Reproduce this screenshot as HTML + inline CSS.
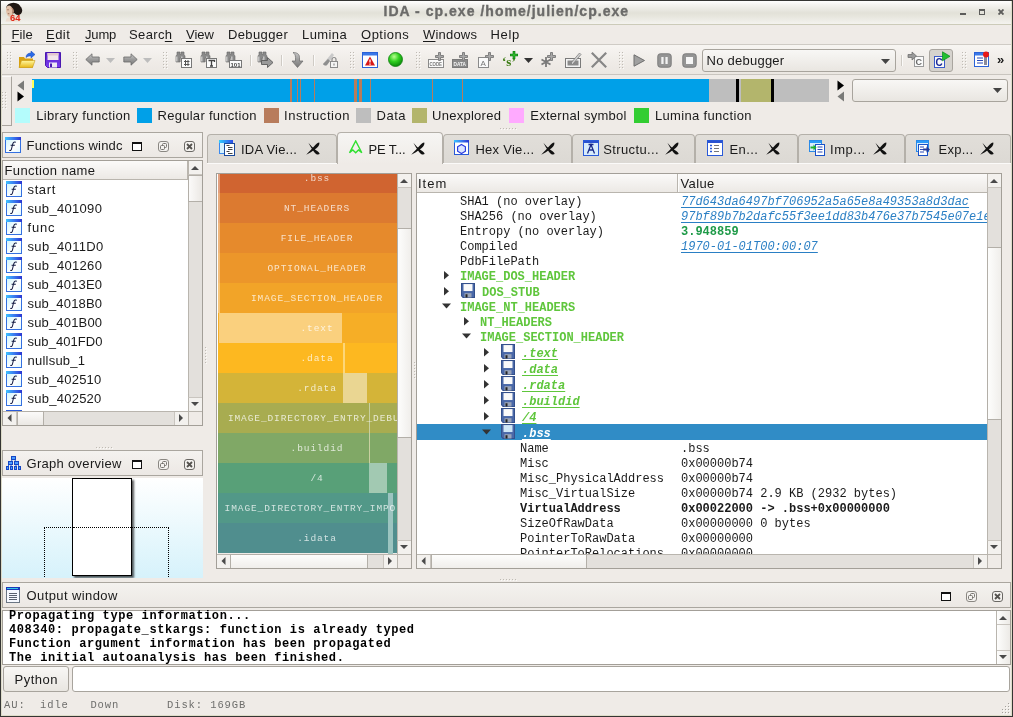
<!DOCTYPE html>
<html><head><meta charset="utf-8">
<style>
*{box-sizing:border-box;margin:0;padding:0}
html,body{width:1013px;height:717px;overflow:hidden;background:#efebe7}
body{font-family:"Liberation Sans",sans-serif;font-size:13px;color:#1a1a1a;position:relative}
.a{position:absolute}
.t{position:absolute;white-space:nowrap;line-height:18px;height:18px}
.m{font-family:"Liberation Mono",monospace}
u{text-decoration:underline;text-underline-offset:2px;text-decoration-thickness:1px}
/* window frame */
#frame{left:0;top:0;width:1013px;height:717px;border:1px solid #353533;pointer-events:none;z-index:50}#frame2{left:1011px;top:1px;width:1px;height:715px;background:#deddc9;z-index:49}#frame3{left:1px;top:715px;width:1011px;height:1px;background:#deddc9;z-index:49}
#title{left:1px;top:1px;width:1011px;height:23px;background:linear-gradient(#ffffff 0%,#f5f4f1 15%,#e2e1d8 52%,#e8e7df 70%,#f4f3ef 100%)}
#titleline{left:1px;top:24px;width:1011px;height:1px;background:#cccbb9}
#menuline{left:1px;top:44px;width:1011px;height:1px;background:#cfcbc5}
#tbar{left:1px;top:45px;width:1011px;height:29px;background:linear-gradient(#f7f5f2,#efebe7 60%,#ebe7e2)}
#tbarline{left:1px;top:74px;width:1011px;height:1px;background:#c9c5bf}
.hd{position:absolute;width:4px;background-image:radial-gradient(circle at 1px 1px,#b9b4ac 0.7px,transparent 0.9px);background-size:3px 3px}
.sep{position:absolute;width:1px;height:11px;top:55px;background:#cfcbc5;box-shadow:1px 0 0 #fbfaf9}
.sq{position:absolute;top:108px;width:15px;height:15px}
.dock{position:absolute;border:1px solid #aaa69f;background:linear-gradient(#f4f2ef,#ece8e4)}
.tab{position:absolute;top:134px;height:29px;background:linear-gradient(#e1ded9,#dcd9d4);border:1px solid #b4b0a9;border-bottom:none;border-radius:4px 4px 0 0}
.tab.on{top:132px;height:32px;background:linear-gradient(#f6f5f3,#efebe7);z-index:3}
.sb{position:absolute;background:#e3e0dc;border-left:1px solid #b9b5ae}
.btn{position:absolute;background:linear-gradient(#f8f7f5,#e9e6e1);border:1px solid #a8a49d}
.row{margin-top:2px;position:absolute;left:0;height:15px;width:570px;line-height:15px;font-family:"Liberation Mono",monospace;font-size:12px;white-space:nowrap}
.g{color:#5fc63c;font-weight:bold}
.lnk{color:#2a7fc4;font-style:italic;text-decoration:underline;text-underline-offset:2px;text-decoration-thickness:1px}
.blk{position:absolute;left:0;width:198px;height:30px;text-align:center;line-height:31px;font-family:"Liberation Mono",monospace;font-size:9.5px;letter-spacing:0.9px;color:rgba(255,255,255,.74);white-space:nowrap;overflow:hidden}
.gi{font-style:italic;text-decoration:underline;text-underline-offset:2px;text-decoration-thickness:1px}.selw{color:#fff}.ent{color:#1e9a48;font-weight:bold}.bd{font-weight:bold}
</style></head><body><div id="root" style="position:absolute;left:0;top:0;width:1013px;height:717px;will-change:transform">
<div class="a" id="title"></div><div class="a" id="titleline"></div>
<div class="a" id="menuline"></div><div class="a" id="tbar"></div><div class="a" id="tbarline"></div>
<div class="t" style="/*ls*/letter-spacing:1.03px;left:383.5px;top:2px;font-weight:bold;font-size:14px;color:#6b6b69;-webkit-text-stroke:0.35px #6b6b69;" id="ttl">IDA - cp.exe /home/julien/cp.exe</div>
<svg class="a" style="left:4px;top:2px" width="19" height="20" viewBox="0 0 19 20"><path d="M2.500 16.500Q6 14.500 8 14L13 13.500Q15.500 15.500 16.500 19.500L1.500 19.500Z" fill="#ecdccf"/><ellipse cx="9.500" cy="6" rx="7.300" ry="5.300" fill="#1f1713"/><ellipse cx="14" cy="8.500" rx="4.200" ry="4.600" fill="#1f1713"/><path d="M2 6.500Q2.500 3.500 5.500 3.500Q8.500 4.500 8.800 8Q9 11.500 7.500 14.500Q5 15.500 3.500 13.500Q1.500 10 2 6.500Z" fill="#e3c3ab"/><path d="M6.500 5Q8.800 7 8.500 11Q8 13.500 7 14.500Q9.500 13 10 9.500Q10 6 6.500 5Z" fill="#b98a72"/><path d="M3.200 7.800h1.600M3.800 11.700h1.500" stroke="#7a4a3a" stroke-width="0.700"/><text x="6" y="18.600" font-family="Liberation Sans" font-weight="bold" font-size="9.500" fill="#e02818" textLength="10.500" lengthAdjust="spacingAndGlyphs">64</text></svg>
<!-- window buttons -->
<div class="a" style="left:960px;top:13px;width:6px;height:2px;background:#5c5c5a"></div>
<div class="a" style="left:979px;top:9px;width:6px;height:6px;border:1px solid #5c5c5a;border-top-width:2px"></div>
<svg class="a" style="left:998px;top:9px" width="6" height="6" viewBox="0 0 6 6"><path d="M0.500 0.500L5.500 5.500M5.500 0.500L0.500 5.500" stroke="#5c5c5a" stroke-width="1.900"/></svg>

<div class="t" style="/*ls*/letter-spacing:0.09px;left:11.5px;top:26px" id="m1"><u>F</u>ile</div>
<div class="t" style="/*ls*/letter-spacing:0.48px;left:46.0px;top:26px" id="m2"><u>E</u>dit</div>
<div class="t" style="/*ls*/letter-spacing:-0.15px;left:85.0px;top:26px" id="m3"><u>J</u>ump</div>
<div class="t" style="/*ls*/letter-spacing:0.37px;left:129.0px;top:26px" id="m4">Searc<u>h</u></div>
<div class="t" style="/*ls*/letter-spacing:0.01px;left:186.0px;top:26px" id="m5"><u>V</u>iew</div>
<div class="t" style="/*ls*/letter-spacing:0.37px;left:228.0px;top:26px" id="m6">Deb<u>u</u>gger</div>
<div class="t" style="/*ls*/letter-spacing:0.42px;left:302.0px;top:26px" id="m7">Lumi<u>n</u>a</div>
<div class="t" style="/*ls*/letter-spacing:0.50px;left:361.0px;top:26px" id="m8"><u>O</u>ptions</div>
<div class="t" style="/*ls*/letter-spacing:0.19px;left:423.0px;top:26px" id="m9"><u>W</u>indows</div>
<div class="t" style="/*ls*/letter-spacing:0.63px;left:490.5px;top:26px" id="m10">Help</div>

<svg width="0" height="0" style="position:absolute"><defs>
<linearGradient id="gy" x1="0" y1="0" x2="0" y2="1"><stop offset="0" stop-color="#fff8a0"/><stop offset="1" stop-color="#e8b818"/></linearGradient>
<linearGradient id="gp" x1="0" y1="0" x2="0" y2="1"><stop offset="0" stop-color="#5a22c8"/><stop offset="1" stop-color="#7a3cf0"/></linearGradient>
<linearGradient id="gg" x1="0" y1="0" x2="0" y2="1"><stop offset="0" stop-color="#c8c8c8"/><stop offset="0.5" stop-color="#9a9a9a"/><stop offset="1" stop-color="#7a7a7a"/></linearGradient>
<radialGradient id="gb" cx="0.4" cy="0.3" r="0.7"><stop offset="0" stop-color="#b8ff90"/><stop offset="0.5" stop-color="#30d020"/><stop offset="1" stop-color="#0a8a0a"/></radialGradient>
<g id="bino"><path d="M2 1h3v2.500h1v-2.500h3v2.500l1 1.500v6h-4v-4h-1v4h-4v-6l1-1.500z" fill="#8a8a8a" stroke="#666" stroke-width="0.6"/><path d="M1.800 5.500v5M6.800 5.500v5" stroke="#d4d4d4" stroke-width="1.200"/></g>
<g id="plus"><path d="M1.500 -0.500h2v3h3v2h-3v3h-2v-3h-3v-2h3z" fill="#a8a8a8" stroke="#808080" stroke-width="1"/></g>
</defs></svg>
<div class="a" style="left:7px;top:52px;width:1px;height:1px;background:#bfbbb4;box-shadow:0px 3px 0 #bfbbb4,0px 6px 0 #bfbbb4,0px 9px 0 #bfbbb4,0px 12px 0 #bfbbb4,0px 15px 0 #bfbbb4,3px 0px 0 #bfbbb4,3px 3px 0 #bfbbb4,3px 6px 0 #bfbbb4,3px 9px 0 #bfbbb4,3px 12px 0 #bfbbb4,3px 15px 0 #bfbbb4,1px 1px 0 #fbfaf8,1px 4px 0 #fbfaf8,1px 7px 0 #fbfaf8,1px 10px 0 #fbfaf8,1px 13px 0 #fbfaf8,1px 16px 0 #fbfaf8,4px 1px 0 #fbfaf8,4px 4px 0 #fbfaf8,4px 7px 0 #fbfaf8,4px 10px 0 #fbfaf8,4px 13px 0 #fbfaf8,4px 16px 0 #fbfaf8"></div>
<svg class="a" style="left:18px;top:51px" width="18" height="18" viewBox="0 0 18 18"><path d="M1 6h5l1 1.5h8v9h-14z" fill="#d8a010"/><path d="M3.5 9.5h13.5l-2.5 7h-13.5z" fill="url(#gy)" stroke="#c89810" stroke-width="0.6"/><path d="M8 6.5c0-3 2-4.5 5-4.5v-2l4 3.5-4 3.5v-2c-2 0-3.5 0.200-5 1.500z" fill="#2a6ae8" stroke="#1844b0" stroke-width="0.5"/></svg>
<svg class="a" style="left:45px;top:52px" width="16" height="16" viewBox="0 0 16 16"><path d="M0.500 0.500h15v15h-13l-2-2z" fill="url(#gp)" stroke="#4a18b0"/><rect x="2.500" y="1" width="11" height="7" fill="#f3e6ea"/><rect x="2.500" y="1" width="11" height="2.500" fill="#e4c8d0"/><rect x="4" y="10.500" width="8" height="5" fill="#ece8f4"/><rect x="5" y="11.500" width="2" height="3.500" fill="#4a18b0"/></svg>
<div class="a" style="left:73px;top:52px;width:1px;height:1px;background:#bfbbb4;box-shadow:0px 3px 0 #bfbbb4,0px 6px 0 #bfbbb4,0px 9px 0 #bfbbb4,0px 12px 0 #bfbbb4,0px 15px 0 #bfbbb4,3px 0px 0 #bfbbb4,3px 3px 0 #bfbbb4,3px 6px 0 #bfbbb4,3px 9px 0 #bfbbb4,3px 12px 0 #bfbbb4,3px 15px 0 #bfbbb4,1px 1px 0 #fbfaf8,1px 4px 0 #fbfaf8,1px 7px 0 #fbfaf8,1px 10px 0 #fbfaf8,1px 13px 0 #fbfaf8,1px 16px 0 #fbfaf8,4px 1px 0 #fbfaf8,4px 4px 0 #fbfaf8,4px 7px 0 #fbfaf8,4px 10px 0 #fbfaf8,4px 13px 0 #fbfaf8,4px 16px 0 #fbfaf8"></div>
<svg class="a" style="left:85px;top:53px" width="15" height="13" viewBox="0 0 15 13"><path d="M7 0.800v3.200h7.200v5h-7.200v3.200l-6.200-5.700z" fill="url(#gg)" stroke="#6a6a6a" stroke-width="0.8"/></svg>
<svg class="a" style="left:106px;top:58px" width="9" height="5"><path d="M0 0H9L4.500 5Z" fill="#bdbdbd"/></svg>
<svg class="a" style="left:123px;top:53px" width="15" height="13" viewBox="0 0 15 13"><path d="M8 0.800v3.200h-7.200v5h7.200v3.200l6.200-5.700z" fill="url(#gg)" stroke="#6a6a6a" stroke-width="0.8"/></svg>
<svg class="a" style="left:143px;top:58px" width="9" height="5"><path d="M0 0H9L4.500 5Z" fill="#bdbdbd"/></svg>
<div class="a" style="left:163px;top:52px;width:1px;height:1px;background:#bfbbb4;box-shadow:0px 3px 0 #bfbbb4,0px 6px 0 #bfbbb4,0px 9px 0 #bfbbb4,0px 12px 0 #bfbbb4,0px 15px 0 #bfbbb4,3px 0px 0 #bfbbb4,3px 3px 0 #bfbbb4,3px 6px 0 #bfbbb4,3px 9px 0 #bfbbb4,3px 12px 0 #bfbbb4,3px 15px 0 #bfbbb4,1px 1px 0 #fbfaf8,1px 4px 0 #fbfaf8,1px 7px 0 #fbfaf8,1px 10px 0 #fbfaf8,1px 13px 0 #fbfaf8,1px 16px 0 #fbfaf8,4px 1px 0 #fbfaf8,4px 4px 0 #fbfaf8,4px 7px 0 #fbfaf8,4px 10px 0 #fbfaf8,4px 13px 0 #fbfaf8,4px 16px 0 #fbfaf8"></div>
<svg class="a" style="left:175px;top:51px" width="17" height="17" viewBox="0 0 17 17"><use href="#bino"/><rect x="6.500" y="7.500" width="10" height="9" fill="#fbfbfb" stroke="#777"/><path d="M9 10.500h5.500M9 13.500h5.500M10.500 9v6M13 9v6" stroke="#555" stroke-width="1"/></svg>
<svg class="a" style="left:200px;top:51px" width="17" height="17" viewBox="0 0 17 17"><use href="#bino"/><rect x="6.500" y="7.500" width="10" height="9" fill="#fbfbfb" stroke="#777"/><path d="M8.500 9.500h6v1.500M11.500 9.500v5.500M10 15h3" stroke="#444" stroke-width="1.300" fill="none"/></svg>
<svg class="a" style="left:225px;top:51px" width="17" height="17" viewBox="0 0 17 17"><use href="#bino"/><rect x="4.500" y="9.500" width="12" height="7" fill="#fbfbfb" stroke="#777"/><text x="5.500" y="15.500" font-family="Liberation Sans" font-weight="bold" font-size="6" fill="#444">101</text></svg>
<div class="sep" style="left:250px"></div>
<svg class="a" style="left:257px;top:51px" width="17" height="17" viewBox="0 0 17 17"><use href="#bino"/><path d="M4.500 9.500h6v-3l5.500 5-5.500 5v-3h-6z" fill="#9a9a9a" stroke="#5a5a5a" stroke-width="0.900"/></svg>
<div class="sep" style="left:281px"></div>
<svg class="a" style="left:291px;top:52px" width="14" height="16" viewBox="0 0 14 16"><path d="M2 0.500c4 0 6.500 1.500 6.500 5v3.500h3.500l-5.500 6.500-5.500-6.500h3.500v-3.500c0-2.500-1-4-2.500-5z" fill="url(#gg)" stroke="#6a6a6a" stroke-width="0.700"/></svg>
<div class="sep" style="left:313px"></div>
<svg class="a" style="left:322px;top:52px" width="16" height="16" viewBox="0 0 16 16"><path d="M1 12l9-11 2 2-7 10c-1.500 1-3 0.500-4-1z" fill="#c9c9c9"/><path d="M1 12l5-5 2 2-3 4c-1.500 1-3 0.500-4-1z" fill="#8e8e8e"/><rect x="8.500" y="9.500" width="7" height="6" fill="#f4f4f4" stroke="#8a8a8a"/><path d="M10 9.500v-2a2 2 0 0 1 4 0v2" fill="none" stroke="#8a8a8a" stroke-width="1.200"/><rect x="11.500" y="11.500" width="1" height="2" fill="#777"/></svg>
<div class="a" style="left:350px;top:52px;width:1px;height:1px;background:#bfbbb4;box-shadow:0px 3px 0 #bfbbb4,0px 6px 0 #bfbbb4,0px 9px 0 #bfbbb4,0px 12px 0 #bfbbb4,0px 15px 0 #bfbbb4,3px 0px 0 #bfbbb4,3px 3px 0 #bfbbb4,3px 6px 0 #bfbbb4,3px 9px 0 #bfbbb4,3px 12px 0 #bfbbb4,3px 15px 0 #bfbbb4,1px 1px 0 #fbfaf8,1px 4px 0 #fbfaf8,1px 7px 0 #fbfaf8,1px 10px 0 #fbfaf8,1px 13px 0 #fbfaf8,1px 16px 0 #fbfaf8,4px 1px 0 #fbfaf8,4px 4px 0 #fbfaf8,4px 7px 0 #fbfaf8,4px 10px 0 #fbfaf8,4px 13px 0 #fbfaf8,4px 16px 0 #fbfaf8"></div>
<svg class="a" style="left:362px;top:52px" width="16" height="16" viewBox="0 0 16 16"><rect x="0.500" y="0.500" width="15" height="15" fill="#fff" stroke="#2a62d8"/><rect x="1" y="1" width="14" height="2.500" fill="#3a78e8"/><path d="M8 4.500l5 9h-10z" fill="#d81818"/><path d="M8 7.500v3M8 11.500v1.200" stroke="#fff" stroke-width="1.300"/></svg>
<svg class="a" style="left:388px;top:52px" width="15" height="15" viewBox="0 0 15 15"><circle cx="7.500" cy="7.500" r="7" fill="url(#gb)" stroke="#108010" stroke-width="0.800"/></svg>
<div class="a" style="left:416px;top:52px;width:1px;height:1px;background:#bfbbb4;box-shadow:0px 3px 0 #bfbbb4,0px 6px 0 #bfbbb4,0px 9px 0 #bfbbb4,0px 12px 0 #bfbbb4,0px 15px 0 #bfbbb4,3px 0px 0 #bfbbb4,3px 3px 0 #bfbbb4,3px 6px 0 #bfbbb4,3px 9px 0 #bfbbb4,3px 12px 0 #bfbbb4,3px 15px 0 #bfbbb4,1px 1px 0 #fbfaf8,1px 4px 0 #fbfaf8,1px 7px 0 #fbfaf8,1px 10px 0 #fbfaf8,1px 13px 0 #fbfaf8,1px 16px 0 #fbfaf8,4px 1px 0 #fbfaf8,4px 4px 0 #fbfaf8,4px 7px 0 #fbfaf8,4px 10px 0 #fbfaf8,4px 13px 0 #fbfaf8,4px 16px 0 #fbfaf8"></div>
<svg class="a" style="left:428px;top:50px" width="17" height="18" viewBox="0 0 17 18"><rect x="0.500" y="9.500" width="15" height="8" fill="#fafafa" stroke="#8a8a8a"/><text x="1.500" y="16" font-family="Liberation Sans" font-weight="bold" font-size="5.500" fill="#777" textLength="12.500" lengthAdjust="spacingAndGlyphs">CODE</text><g transform="translate(9,3)"><use href="#plus"/></g></svg>
<svg class="a" style="left:452px;top:50px" width="17" height="18" viewBox="0 0 17 18"><rect x="0.500" y="9.500" width="15" height="8" fill="#8a8a8a" stroke="#7a7a7a"/><text x="1.500" y="16" font-family="Liberation Sans" font-weight="bold" font-size="5.500" fill="#f4f4f4" textLength="12.500" lengthAdjust="spacingAndGlyphs">DATA</text><g transform="translate(9,3)"><use href="#plus"/></g></svg>
<svg class="a" style="left:478px;top:50px" width="17" height="18" viewBox="0 0 17 18"><rect x="0.500" y="7.500" width="10" height="10" fill="#fafafa" stroke="#8a8a8a"/><text x="2.500" y="16" font-family="Liberation Sans" font-size="8" fill="#777">A</text><g transform="translate(9,3)"><use href="#plus"/></g></svg>
<svg class="a" style="left:502px;top:50px" width="18" height="18" viewBox="0 0 18 18"><text x="0" y="16" font-family="Liberation Serif" font-weight="bold" font-size="13" fill="#3a7a12">‘s’</text><path d="M8 5h8M12 1v8" stroke="#0a7a0a" stroke-width="2.600"/><path d="M8.500 5h7M12 1.500v7" stroke="#38c838" stroke-width="1"/></svg>
<svg class="a" style="left:524px;top:58px" width="9" height="5"><path d="M0 0H9L4.500 5Z" fill="#333"/></svg>
<svg class="a" style="left:540px;top:50px" width="17" height="18" viewBox="0 0 17 18"><path d="M6 7v10M1.500 9.500l9 5M1.500 14.500l9-5" stroke="#7a7a7a" stroke-width="1.800"/><g transform="translate(9,3)"><use href="#plus"/></g></svg>
<svg class="a" style="left:565px;top:51px" width="17" height="17" viewBox="0 0 17 17"><rect x="0.500" y="7.500" width="15" height="9" fill="#f4f4f4" stroke="#7a7a7a"/><rect x="2.500" y="9.500" width="11" height="5" fill="#8a8a8a"/><path d="M6 12l8.500-10 1.500 1.500-8.500 10z" fill="#d0d0d0" stroke="#777" stroke-width="0.700"/></svg>
<svg class="a" style="left:591px;top:52px" width="16" height="16" viewBox="0 0 16 16"><path d="M0.800 0.800l14.400 14.400M15.200 0.800l-14.400 14.400" stroke="#868686" stroke-width="2.200"/></svg>
<div class="a" style="left:619px;top:52px;width:1px;height:1px;background:#bfbbb4;box-shadow:0px 3px 0 #bfbbb4,0px 6px 0 #bfbbb4,0px 9px 0 #bfbbb4,0px 12px 0 #bfbbb4,0px 15px 0 #bfbbb4,3px 0px 0 #bfbbb4,3px 3px 0 #bfbbb4,3px 6px 0 #bfbbb4,3px 9px 0 #bfbbb4,3px 12px 0 #bfbbb4,3px 15px 0 #bfbbb4,1px 1px 0 #fbfaf8,1px 4px 0 #fbfaf8,1px 7px 0 #fbfaf8,1px 10px 0 #fbfaf8,1px 13px 0 #fbfaf8,1px 16px 0 #fbfaf8,4px 1px 0 #fbfaf8,4px 4px 0 #fbfaf8,4px 7px 0 #fbfaf8,4px 10px 0 #fbfaf8,4px 13px 0 #fbfaf8,4px 16px 0 #fbfaf8"></div>
<svg class="a" style="left:633px;top:54px" width="13" height="13" viewBox="0 0 13 13"><path d="M1 0.800v11.400l10.500-5.700z" fill="#a0a0a0" stroke="#6e6e6e" stroke-width="1"/></svg>
<svg class="a" style="left:657px;top:53px" width="15" height="15" viewBox="0 0 15 15"><rect x="0.800" y="0.800" width="13.400" height="13.400" rx="2.500" fill="#949494" stroke="#7c7c7c" stroke-width="1"/><rect x="4.300" y="4" width="2.300" height="7" fill="#f2f2f2"/><rect x="8.400" y="4" width="2.300" height="7" fill="#f2f2f2"/></svg>
<svg class="a" style="left:682px;top:53px" width="15" height="15" viewBox="0 0 15 15"><rect x="0.800" y="0.800" width="13.400" height="13.400" rx="2.500" fill="#949494" stroke="#7c7c7c" stroke-width="1"/><rect x="4" y="4" width="7" height="7" fill="#f6f6f6"/></svg>
<div class="btn" style="left:702px;top:49px;width:194px;height:23px;border-radius:3px"></div>
<div class="t" style="/*ls*/letter-spacing:0.25px;left:706.5px;top:52px" id="nodbg">No debugger</div>
<svg class="a" style="left:881px;top:59px" width="9" height="5"><path d="M0 0H9L4.500 5Z" fill="#444"/></svg>
<div class="sep" style="left:901px"></div>
<svg class="a" style="left:907px;top:51px" width="18" height="17" viewBox="0 0 18 17"><rect x="7.500" y="5.500" width="9" height="10" fill="#fafafa" stroke="#9a9a9a"/><text x="8.500" y="14" font-family="Liberation Sans" font-weight="bold" font-size="9" fill="#6a6a6a">C</text><path d="M1 3.500h4v-2.500l4.500 4-4.500 4v-2.500h-4z" fill="#9a9a9a" stroke="#666" stroke-width="0.700"/></svg>
<div class="a" style="left:929px;top:49px;width:24px;height:23px;border:1px solid #a9a59f;border-radius:3px;background:#d6d3ce"></div>
<svg class="a" style="left:933px;top:51px" width="18" height="18" viewBox="0 0 18 18"><rect x="1.500" y="5.500" width="10" height="11" fill="#fafafa" stroke="#3a5ac8"/><text x="2.500" y="15" font-family="Liberation Sans" font-weight="bold" font-size="10" fill="#1a2a9a">C</text><path d="M9.500 0.800v9l7.500-4.500z" fill="#20c030" stroke="#0a8a1a" stroke-width="0.700"/></svg>
<div class="a" style="left:962px;top:52px;width:1px;height:1px;background:#bfbbb4;box-shadow:0px 3px 0 #bfbbb4,0px 6px 0 #bfbbb4,0px 9px 0 #bfbbb4,0px 12px 0 #bfbbb4,0px 15px 0 #bfbbb4,3px 0px 0 #bfbbb4,3px 3px 0 #bfbbb4,3px 6px 0 #bfbbb4,3px 9px 0 #bfbbb4,3px 12px 0 #bfbbb4,3px 15px 0 #bfbbb4,1px 1px 0 #fbfaf8,1px 4px 0 #fbfaf8,1px 7px 0 #fbfaf8,1px 10px 0 #fbfaf8,1px 13px 0 #fbfaf8,1px 16px 0 #fbfaf8,4px 1px 0 #fbfaf8,4px 4px 0 #fbfaf8,4px 7px 0 #fbfaf8,4px 10px 0 #fbfaf8,4px 13px 0 #fbfaf8,4px 16px 0 #fbfaf8"></div>
<svg class="a" style="left:974px;top:51px" width="17" height="17" viewBox="0 0 17 17"><rect x="0.500" y="1.500" width="14" height="14" fill="#fff" stroke="#2a62d8"/><rect x="1" y="2" width="13" height="2.500" fill="#3a78e8"/><path d="M3 7h6M3 9.500h6M3 12h6" stroke="#2a4ab8" stroke-width="1.200"/><rect x="10" y="6" width="3" height="8" fill="#8a8a9a"/><circle cx="12" cy="3.500" r="3" fill="#e81818"/></svg>
<div class="t" style="left:997px;top:51px;font-weight:bold;font-size:13px">»</div>

<div class="a" style="left:2px;top:92px;width:1px;height:1px;background:#bfbbb4;box-shadow:0px 3px 0 #bfbbb4,0px 6px 0 #bfbbb4,0px 9px 0 #bfbbb4,0px 12px 0 #bfbbb4,0px 15px 0 #bfbbb4,3px 0px 0 #bfbbb4,3px 3px 0 #bfbbb4,3px 6px 0 #bfbbb4,3px 9px 0 #bfbbb4,3px 12px 0 #bfbbb4,3px 15px 0 #bfbbb4,1px 1px 0 #fbfaf8,1px 4px 0 #fbfaf8,1px 7px 0 #fbfaf8,1px 10px 0 #fbfaf8,1px 13px 0 #fbfaf8,1px 16px 0 #fbfaf8,4px 1px 0 #fbfaf8,4px 4px 0 #fbfaf8,4px 7px 0 #fbfaf8,4px 10px 0 #fbfaf8,4px 13px 0 #fbfaf8,4px 16px 0 #fbfaf8"></div>
<div class="a" style="left:2px;top:76px;width:10px;height:50px;border-top:1px solid #fbfaf9;border-right:1px solid #a9a59e;border-bottom:1px solid #a9a59e"></div>
<svg class="a" style="left:17px;top:80px" width="8" height="22" viewBox="0 0 8 22"><path d="M7 0.5V10.5L0.5 5.5Z" fill="#7a7a78"/><path d="M0.5 11.5V21.5L7 16.5Z" fill="#000"/></svg>
<div class="a" style="left:32px;top:79px;width:797px;height:23px;background:#bebebe"></div>
<div class="a" style="left:32px;top:79px;width:677px;height:23px;background:#00a0e8"></div>
<div class="a" style="left:32px;top:80px;width:2px;height:8px;background:#ffff5a"></div>
<div class="a" style="left:290px;top:79px;width:2px;height:23px;background:#b87c5c"></div>
<div class="a" style="left:297px;top:79px;width:1px;height:23px;background:#b87c5c"></div>
<div class="a" style="left:300px;top:79px;width:1px;height:23px;background:#b87c5c"></div>
<div class="a" style="left:314px;top:79px;width:1px;height:23px;background:#b87c5c"></div>
<div class="a" style="left:354px;top:79px;width:3px;height:23px;background:#b87c5c"></div>
<div class="a" style="left:359px;top:79px;width:3px;height:23px;background:#b87c5c"></div>
<div class="a" style="left:370px;top:79px;width:1px;height:23px;background:#b87c5c"></div>
<div class="a" style="left:432px;top:79px;width:1px;height:23px;background:#b87c5c"></div>
<div class="a" style="left:462px;top:79px;width:1px;height:23px;background:#b87c5c"></div>
<div class="a" style="left:736px;top:79px;width:3px;height:23px;background:#000"></div>
<div class="a" style="left:741px;top:79px;width:30px;height:23px;background:#b3b56c"></div>
<div class="a" style="left:771px;top:79px;width:3px;height:23px;background:#000"></div>
<svg class="a" style="left:837px;top:80px" width="8" height="22" viewBox="0 0 8 22"><path d="M0.5 0.5V10.5L7 5.5Z" fill="#000"/><path d="M7 11.5V21.5L0.5 16.5Z" fill="#7a7a78"/></svg>
<div class="btn" style="left:852px;top:79px;width:156px;height:23px;border-radius:3px"></div>
<svg class="a" style="left:993px;top:88px" width="9" height="5"><path d="M0 0H9L4.5 5Z" fill="#444"/></svg>
<div class="sq" style="left:15px;background:#b4fcfc"></div><div class="t" style="/*ls*/letter-spacing:0.35px;left:36.2px;top:107px" id="l1">Library function</div>
<div class="sq" style="left:137px;background:#00a0e8"></div><div class="t" style="/*ls*/letter-spacing:0.28px;left:157.5px;top:107px" id="l2">Regular function</div>
<div class="sq" style="left:264px;background:#b87c5c"></div><div class="t" style="/*ls*/letter-spacing:0.56px;left:284.0px;top:107px" id="l3">Instruction</div>
<div class="sq" style="left:356px;background:#bebebe"></div><div class="t" style="/*ls*/letter-spacing:0.51px;left:376.5px;top:107px" id="l4">Data</div>
<div class="sq" style="left:412px;background:#b3b56c"></div><div class="t" style="/*ls*/letter-spacing:0.27px;left:432.0px;top:107px" id="l5">Unexplored</div>
<div class="sq" style="left:509px;background:#ffaaff"></div><div class="t" style="/*ls*/letter-spacing:0.27px;left:530.2px;top:107px" id="l6">External symbol</div>
<div class="sq" style="left:634px;background:#32cd32"></div><div class="t" style="/*ls*/letter-spacing:0.34px;left:654.9px;top:107px" id="l7">Lumina function</div>


<svg width="0" height="0" style="position:absolute"><defs><linearGradient id="gfb" x1="0" y1="0" x2="1" y2="0"><stop offset="0" stop-color="#3cc4ff"/><stop offset="0.5" stop-color="#3a7cf0"/><stop offset="1" stop-color="#2a34d0"/></linearGradient><linearGradient id="gf" x1="0" y1="0" x2="1" y2="1"><stop offset="0" stop-color="#c8f4fc"/><stop offset="0.6" stop-color="#ffffff"/><stop offset="1" stop-color="#e0f8ff"/></linearGradient></defs></svg>
<div class="dock" style="left:2px;top:132px;width:201px;height:26px"></div><svg class="a" style="left:5px;top:137px" width="16" height="16" viewBox="0 0 16 16"><rect x="0.500" y="0.500" width="15" height="15" fill="url(#gf)" stroke="#3470e0"/><rect x="0" y="0" width="16" height="3" fill="url(#gfb)"/><path d="M10.800 5.200c-2-0.800-2.800 0.300-3.200 2.300l-1.100 4.500c-0.300 1.300-1 1.700-2.200 1.200M5.600 8.200h4.200" fill="none" stroke="#101840" stroke-width="1.050"/></svg><div class="t" style="/*ls*/letter-spacing:0.20px;left:26.5px;top:137px" id="dt1">Functions windc</div>
<div class="a" style="left:132px;top:142px;width:10px;height:9px;border:1px solid #111;border-top-width:2px;background:#fff"></div><svg class="a" style="left:158px;top:141px" width="12" height="12" viewBox="0 0 12 12"><rect x="0.500" y="0.500" width="10" height="10" rx="2.500" fill="#f4f2ef" stroke="#8a8782"/><rect x="4.500" y="2.500" width="4" height="4" fill="none" stroke="#77746f" rx="1"/><rect x="2.500" y="4.500" width="4" height="4" fill="#f4f2ef" stroke="#77746f" rx="1"/></svg><svg class="a" style="left:184px;top:141px" width="12" height="12" viewBox="0 0 12 12"><rect x="0.500" y="0.500" width="10" height="10" rx="2.500" fill="#f4f2ef" stroke="#6a6864"/><path d="M3 3l5 5M8 3l-5 5" stroke="#55534f" stroke-width="1.800"/></svg>
<div class="a" style="left:2px;top:160px;width:201px;height:266px;border:1px solid #a39f98;background:#fff"></div>
<div class="a" style="left:3px;top:161px;width:185px;height:19px;background:linear-gradient(#fbfaf9,#ece9e5);border-bottom:1px solid #b9b5ae;border-right:1px solid #b9b5ae"></div>
<div class="t" style="/*ls*/letter-spacing:0.38px;left:4.5px;top:162px" id="fh">Function name</div>
<svg class="a" style="left:6px;top:181px" width="16" height="16" viewBox="0 0 16 16"><rect x="0.500" y="0.500" width="15" height="15" fill="url(#gf)" stroke="#3470e0"/><rect x="0" y="0" width="16" height="3" fill="url(#gfb)"/><path d="M10.800 5.200c-2-0.800-2.800 0.300-3.200 2.300l-1.100 4.500c-0.300 1.300-1 1.700-2.200 1.200M5.600 8.200h4.200" fill="none" stroke="#101840" stroke-width="1.050"/></svg>
<div class="t" style="/*ls*/letter-spacing:0.63px;left:27.5px;top:181px" id="fn0">start</div>
<svg class="a" style="left:6px;top:200px" width="16" height="16" viewBox="0 0 16 16"><rect x="0.500" y="0.500" width="15" height="15" fill="url(#gf)" stroke="#3470e0"/><rect x="0" y="0" width="16" height="3" fill="url(#gfb)"/><path d="M10.800 5.200c-2-0.800-2.800 0.300-3.200 2.300l-1.100 4.500c-0.300 1.300-1 1.700-2.200 1.200M5.600 8.200h4.200" fill="none" stroke="#101840" stroke-width="1.050"/></svg>
<div class="t" style="/*ls*/letter-spacing:0.31px;left:27.5px;top:200px" id="fn1">sub_401090</div>
<svg class="a" style="left:6px;top:219px" width="16" height="16" viewBox="0 0 16 16"><rect x="0.500" y="0.500" width="15" height="15" fill="url(#gf)" stroke="#3470e0"/><rect x="0" y="0" width="16" height="3" fill="url(#gfb)"/><path d="M10.800 5.200c-2-0.800-2.800 0.300-3.200 2.300l-1.100 4.500c-0.300 1.300-1 1.700-2.200 1.200M5.600 8.200h4.200" fill="none" stroke="#101840" stroke-width="1.050"/></svg>
<div class="t" style="/*ls*/letter-spacing:0.83px;left:27.5px;top:219px" id="fn2">func</div>
<svg class="a" style="left:6px;top:238px" width="16" height="16" viewBox="0 0 16 16"><rect x="0.500" y="0.500" width="15" height="15" fill="url(#gf)" stroke="#3470e0"/><rect x="0" y="0" width="16" height="3" fill="url(#gfb)"/><path d="M10.800 5.200c-2-0.800-2.800 0.300-3.200 2.300l-1.100 4.500c-0.300 1.300-1 1.700-2.200 1.200M5.600 8.200h4.200" fill="none" stroke="#101840" stroke-width="1.050"/></svg>
<div class="t" style="/*ls*/letter-spacing:0.33px;left:27.5px;top:238px" id="fn3">sub_4011D0</div>
<svg class="a" style="left:6px;top:257px" width="16" height="16" viewBox="0 0 16 16"><rect x="0.500" y="0.500" width="15" height="15" fill="url(#gf)" stroke="#3470e0"/><rect x="0" y="0" width="16" height="3" fill="url(#gfb)"/><path d="M10.800 5.200c-2-0.800-2.800 0.300-3.200 2.300l-1.100 4.500c-0.300 1.300-1 1.700-2.200 1.200M5.600 8.200h4.200" fill="none" stroke="#101840" stroke-width="1.050"/></svg>
<div class="t" style="/*ls*/letter-spacing:0.31px;left:27.5px;top:257px" id="fn4">sub_401260</div>
<svg class="a" style="left:6px;top:276px" width="16" height="16" viewBox="0 0 16 16"><rect x="0.500" y="0.500" width="15" height="15" fill="url(#gf)" stroke="#3470e0"/><rect x="0" y="0" width="16" height="3" fill="url(#gfb)"/><path d="M10.800 5.200c-2-0.800-2.800 0.300-3.200 2.300l-1.100 4.500c-0.300 1.300-1 1.700-2.200 1.200M5.600 8.200h4.200" fill="none" stroke="#101840" stroke-width="1.050"/></svg>
<div class="t" style="/*ls*/letter-spacing:0.17px;left:27.5px;top:276px" id="fn5">sub_4013E0</div>
<svg class="a" style="left:6px;top:295px" width="16" height="16" viewBox="0 0 16 16"><rect x="0.500" y="0.500" width="15" height="15" fill="url(#gf)" stroke="#3470e0"/><rect x="0" y="0" width="16" height="3" fill="url(#gfb)"/><path d="M10.800 5.200c-2-0.800-2.800 0.300-3.200 2.300l-1.100 4.500c-0.300 1.300-1 1.700-2.200 1.200M5.600 8.200h4.200" fill="none" stroke="#101840" stroke-width="1.050"/></svg>
<div class="t" style="/*ls*/letter-spacing:0.17px;left:27.5px;top:295px" id="fn6">sub_4018B0</div>
<svg class="a" style="left:6px;top:314px" width="16" height="16" viewBox="0 0 16 16"><rect x="0.500" y="0.500" width="15" height="15" fill="url(#gf)" stroke="#3470e0"/><rect x="0" y="0" width="16" height="3" fill="url(#gfb)"/><path d="M10.800 5.200c-2-0.800-2.800 0.300-3.200 2.300l-1.100 4.500c-0.300 1.300-1 1.700-2.200 1.200M5.600 8.200h4.200" fill="none" stroke="#101840" stroke-width="1.050"/></svg>
<div class="t" style="/*ls*/letter-spacing:0.17px;left:27.5px;top:314px" id="fn7">sub_401B00</div>
<svg class="a" style="left:6px;top:333px" width="16" height="16" viewBox="0 0 16 16"><rect x="0.500" y="0.500" width="15" height="15" fill="url(#gf)" stroke="#3470e0"/><rect x="0" y="0" width="16" height="3" fill="url(#gfb)"/><path d="M10.800 5.200c-2-0.800-2.800 0.300-3.200 2.300l-1.100 4.500c-0.300 1.300-1 1.700-2.200 1.200M5.600 8.200h4.200" fill="none" stroke="#101840" stroke-width="1.050"/></svg>
<div class="t" style="/*ls*/letter-spacing:0.06px;left:27.5px;top:333px" id="fn8">sub_401FD0</div>
<svg class="a" style="left:6px;top:352px" width="16" height="16" viewBox="0 0 16 16"><rect x="0.500" y="0.500" width="15" height="15" fill="url(#gf)" stroke="#3470e0"/><rect x="0" y="0" width="16" height="3" fill="url(#gfb)"/><path d="M10.800 5.200c-2-0.800-2.800 0.300-3.200 2.300l-1.100 4.500c-0.300 1.300-1 1.700-2.200 1.200M5.600 8.200h4.200" fill="none" stroke="#101840" stroke-width="1.050"/></svg>
<div class="t" style="/*ls*/letter-spacing:0.23px;left:27.5px;top:352px" id="fn9">nullsub_1</div>
<svg class="a" style="left:6px;top:371px" width="16" height="16" viewBox="0 0 16 16"><rect x="0.500" y="0.500" width="15" height="15" fill="url(#gf)" stroke="#3470e0"/><rect x="0" y="0" width="16" height="3" fill="url(#gfb)"/><path d="M10.800 5.200c-2-0.800-2.800 0.300-3.200 2.300l-1.100 4.500c-0.300 1.300-1 1.700-2.200 1.200M5.600 8.200h4.200" fill="none" stroke="#101840" stroke-width="1.050"/></svg>
<div class="t" style="/*ls*/letter-spacing:0.25px;left:27.5px;top:371px" id="fn10">sub_402510</div>
<svg class="a" style="left:6px;top:390px" width="16" height="16" viewBox="0 0 16 16"><rect x="0.500" y="0.500" width="15" height="15" fill="url(#gf)" stroke="#3470e0"/><rect x="0" y="0" width="16" height="3" fill="url(#gfb)"/><path d="M10.800 5.200c-2-0.800-2.800 0.300-3.200 2.300l-1.100 4.500c-0.300 1.300-1 1.700-2.200 1.200M5.600 8.200h4.200" fill="none" stroke="#101840" stroke-width="1.050"/></svg>
<div class="t" style="/*ls*/letter-spacing:0.25px;left:27.5px;top:390px" id="fn11">sub_402520</div>
<div class="a" style="left:6px;top:410px;width:16px;height:1px;background:#2a5ad8"></div>
<div class="sb" style="left:188px;top:161px;width:14px;height:250px"></div>
<div class="a" style="left:188px;top:161px;width:14px;height:14px;background:#f3f1ee;border-left:1px solid #b9b5ae;border-bottom:1px solid #c9c5bf"></div>
<svg class="a" style="left:191px;top:166px" width="8" height="5"><path d="M0 4H8L4 0Z" fill="#4a4a4a"/></svg>
<div class="a" style="left:188px;top:175px;width:14px;height:27px;background:linear-gradient(90deg,#fbfaf9,#ebe8e4);border:1px solid #b3afa8;border-right:none"></div>
<div class="a" style="left:188px;top:397px;width:14px;height:14px;background:#f3f1ee;border-left:1px solid #b9b5ae;border-top:1px solid #c9c5bf"></div>
<svg class="a" style="left:191px;top:402px" width="8" height="5"><path d="M0 0H8L4 4Z" fill="#4a4a4a"/></svg>
<div class="a" style="left:3px;top:411px;width:199px;height:14px;background:#e3e0dc;border-top:1px solid #b9b5ae"></div>
<div class="a" style="left:3px;top:412px;width:14px;height:13px;background:#f3f1ee;border-right:1px solid #c9c5bf"></div>
<svg class="a" style="left:7px;top:414px" width="5" height="9"><path d="M4.500 0V8L0.500 4Z" fill="#4a4a4a"/></svg>
<div class="a" style="left:17px;top:411px;width:27px;height:14px;background:linear-gradient(#fbfaf9,#ebe8e4);border:1px solid #b3afa8;border-bottom:none"></div>
<div class="a" style="left:174px;top:412px;width:15px;height:13px;background:#f3f1ee;border-left:1px solid #c9c5bf;border-right:1px solid #b9b5ae"></div>
<svg class="a" style="left:179px;top:414px" width="5" height="9"><path d="M0 0V8L4 4Z" fill="#4a4a4a"/></svg>
<div class="a" style="left:189px;top:412px;width:13px;height:13px;background:#efebe7"></div>
<div class="a" style="left:96px;top:447px;width:1px;height:1px;background:#bfbbb4;box-shadow:3px 0px 0 #bfbbb4,6px 0px 0 #bfbbb4,9px 0px 0 #bfbbb4,12px 0px 0 #bfbbb4,15px 0px 0 #bfbbb4,1px 1px 0 #fbfaf8,4px 1px 0 #fbfaf8,7px 1px 0 #fbfaf8,10px 1px 0 #fbfaf8,13px 1px 0 #fbfaf8,16px 1px 0 #fbfaf8"></div>
<div class="a" style="left:205px;top:347px;width:1px;height:1px;background:#bfbbb4;box-shadow:0px 3px 0 #bfbbb4,0px 6px 0 #bfbbb4,0px 9px 0 #bfbbb4,0px 12px 0 #bfbbb4,0px 15px 0 #bfbbb4,1px 1px 0 #fbfaf8,1px 4px 0 #fbfaf8,1px 7px 0 #fbfaf8,1px 10px 0 #fbfaf8,1px 13px 0 #fbfaf8,1px 16px 0 #fbfaf8"></div>
<div class="dock" style="left:2px;top:450px;width:201px;height:26px"></div><svg class="a" style="left:6px;top:456px" width="16" height="15" viewBox="0 0 16 15"><path d="M6.500 4L4.500 5.500M8.500 4L10.500 5.500M3 9L1.500 10.500M5 9v1.500M10 9v1.500M12 9L13.500 10.500" stroke="#2a6ad8" stroke-width="1"/><rect x="5" y="0" width="5" height="4" fill="#1546c4"/><rect x="6" y="1" width="3" height="2" fill="#4a9cff"/><rect x="2" y="5" width="5" height="4" fill="#1546c4"/><rect x="3" y="6" width="3" height="2" fill="#4a9cff"/><rect x="8" y="5" width="5" height="4" fill="#1546c4"/><rect x="9" y="6" width="3" height="2" fill="#4a9cff"/><rect x="0" y="10" width="3" height="4" fill="#1546c4"/><rect x="1" y="11" width="1" height="2" fill="#4a9cff"/><rect x="4" y="10" width="3" height="4" fill="#1546c4"/><rect x="5" y="11" width="1" height="2" fill="#4a9cff"/><rect x="8" y="10" width="3" height="4" fill="#1546c4"/><rect x="9" y="11" width="1" height="2" fill="#4a9cff"/><rect x="12" y="10" width="3" height="4" fill="#1546c4"/><rect x="13" y="11" width="1" height="2" fill="#4a9cff"/></svg><div class="t" style="/*ls*/letter-spacing:0.30px;left:26.5px;top:455px" id="dt2">Graph overview</div>
<div class="a" style="left:132px;top:460px;width:10px;height:9px;border:1px solid #111;border-top-width:2px;background:#fff"></div><svg class="a" style="left:158px;top:459px" width="12" height="12" viewBox="0 0 12 12"><rect x="0.500" y="0.500" width="10" height="10" rx="2.500" fill="#f4f2ef" stroke="#8a8782"/><rect x="4.500" y="2.500" width="4" height="4" fill="none" stroke="#77746f" rx="1"/><rect x="2.500" y="4.500" width="4" height="4" fill="#f4f2ef" stroke="#77746f" rx="1"/></svg><svg class="a" style="left:184px;top:459px" width="12" height="12" viewBox="0 0 12 12"><rect x="0.500" y="0.500" width="10" height="10" rx="2.500" fill="#f4f2ef" stroke="#6a6864"/><path d="M3 3l5 5M8 3l-5 5" stroke="#55534f" stroke-width="1.800"/></svg>
<div class="a" style="left:2px;top:478px;width:201px;height:100px;background:linear-gradient(#ffffff,#d6f2fb);overflow:hidden"><div class="a" style="left:42px;top:49px;width:125px;height:60px;border:1px dotted #000"></div><div class="a" style="left:70px;top:0px;width:60px;height:98px;background:#fff;border:1px solid #000;box-shadow:2px 2px 2px rgba(0,0,0,.65)"></div><div class="a" style="left:71px;top:49px;width:58px;height:0;border-top:1px dotted #000"></div></div>

<div class="a" style="left:207px;top:162px;width:804px;height:1px;background:#b4b0a9"></div>
<div class="a" style="left:207px;top:163px;width:804px;height:1px;background:#fbfaf9"></div>
<div class="tab" style="left:207px;width:130px"></div><svg class="a" style="left:219px;top:140px;z-index:4" width="17" height="16" viewBox="0 0 17 16"><defs><linearGradient id="gc" x1="0" y1="0" x2="1" y2="0"><stop offset="0" stop-color="#30d0ff"/><stop offset="1" stop-color="#2a4ae8"/></linearGradient></defs><rect x="0.500" y="0.500" width="13" height="13" fill="#d6f2fe" stroke="#3a8af0"/><rect x="0" y="0" width="14" height="3" fill="url(#gc)"/><rect x="5.500" y="3.500" width="10" height="12" fill="#fff" stroke="#1a4a9a"/><path d="M7.500 5.500h3M9 7.500h4.500M9 9.500h4.500M7.500 11.500h3M9 13.500h4.500" stroke="#444" stroke-width="1"/></svg><div class="t" style="/*ls*/letter-spacing:0.21px;left:241.0px;top:141px;z-index:4" id="tb1">IDA Vie...</div><svg class="a" style="z-index:4;left:306px;top:142px" width="14" height="13" viewBox="0 0 13 12"><path d="M12.300 0.400C13 2.500 11 4.800 9 6.300C6 8.700 3 10.600 0.200 11.700C3 9 6 6 8 3.500C9.500 1.700 10.800 0.500 12.300 0.400Z" fill="#111"/><path d="M2.200 0.600C4.500 3.300 6.500 5.300 9 7.300C11.200 8.900 12.800 9.800 12.600 11.200C11 12.200 9 11.200 7.500 9.200C5.500 6.500 3.700 3.500 2.200 0.600Z" fill="#111"/></svg>
<div class="tab on" style="left:337px;width:106px"></div><svg class="a" style="left:348px;top:140px;z-index:4" width="15" height="14" viewBox="0 0 15 14"><path d="M1.500 12.800L7.700 1L13.800 12.800L10.500 10L7.700 12.800L4.800 10Z" fill="none" stroke="#30e030" stroke-width="1.400" stroke-linejoin="miter"/></svg><div class="t" style="/*ls*/letter-spacing:-0.14px;left:368.4px;top:141px;z-index:4" id="tb2">PE T...</div><svg class="a" style="z-index:4;left:411px;top:142px" width="14" height="13" viewBox="0 0 13 12"><path d="M12.300 0.400C13 2.500 11 4.800 9 6.300C6 8.700 3 10.600 0.200 11.700C3 9 6 6 8 3.500C9.500 1.700 10.800 0.500 12.300 0.400Z" fill="#111"/><path d="M2.200 0.600C4.500 3.300 6.500 5.300 9 7.300C11.200 8.900 12.800 9.800 12.600 11.200C11 12.200 9 11.200 7.500 9.200C5.500 6.500 3.700 3.500 2.200 0.600Z" fill="#111"/></svg>
<div class="tab" style="left:443px;width:129px"></div><svg class="a" style="left:454px;top:140px;z-index:4" width="16" height="16" viewBox="0 0 16 16"><rect x="0.500" y="0.500" width="14" height="14" fill="#fff" stroke="#2a5ad8"/><rect x="0" y="0" width="15" height="2.500" fill="url(#gfb)"/><path d="M7.500 4.500L11.400 6.750V11.250L7.500 13.500L3.600 11.250V6.750Z" fill="#dce6ff" stroke="#2a3ae0" stroke-width="1.200"/></svg><div class="t" style="/*ls*/letter-spacing:0.28px;left:475.4px;top:141px;z-index:4" id="tb3">Hex Vie...</div><svg class="a" style="z-index:4;left:541px;top:142px" width="14" height="13" viewBox="0 0 13 12"><path d="M12.300 0.400C13 2.500 11 4.800 9 6.300C6 8.700 3 10.600 0.200 11.700C3 9 6 6 8 3.500C9.500 1.700 10.800 0.500 12.300 0.400Z" fill="#111"/><path d="M2.200 0.600C4.500 3.300 6.500 5.300 9 7.300C11.200 8.900 12.800 9.800 12.600 11.200C11 12.200 9 11.200 7.500 9.200C5.500 6.500 3.700 3.500 2.200 0.600Z" fill="#111"/></svg>
<div class="tab" style="left:572px;width:123px"></div><svg class="a" style="left:583px;top:140px;z-index:4" width="16" height="16" viewBox="0 0 16 16"><rect x="0.500" y="0.500" width="15" height="15" fill="#d8ecfc" stroke="#2a5ad8"/><rect x="1" y="1" width="14" height="2" fill="#2a52d0"/><path d="M4.500 13.500L8 4.500L11.500 13.500M6 10h4M5.500 4.500h5" fill="none" stroke="#1a2a8a" stroke-width="1.300"/></svg><div class="t" style="/*ls*/letter-spacing:0.39px;left:603.2px;top:141px;z-index:4" id="tb4">Structu...</div><svg class="a" style="z-index:4;left:665px;top:142px" width="14" height="13" viewBox="0 0 13 12"><path d="M12.300 0.400C13 2.500 11 4.800 9 6.300C6 8.700 3 10.600 0.200 11.700C3 9 6 6 8 3.500C9.500 1.700 10.800 0.500 12.300 0.400Z" fill="#111"/><path d="M2.200 0.600C4.500 3.300 6.500 5.300 9 7.300C11.200 8.900 12.800 9.800 12.600 11.200C11 12.200 9 11.200 7.500 9.200C5.500 6.500 3.700 3.500 2.200 0.600Z" fill="#111"/></svg>
<div class="tab" style="left:695px;width:103px"></div><svg class="a" style="left:707px;top:140px;z-index:4" width="16" height="16" viewBox="0 0 16 16"><rect x="0.500" y="0.500" width="15" height="15" fill="#fff" stroke="#2a5ad8"/><rect x="1" y="1" width="14" height="2" fill="#2a52d0"/><path d="M3 5.500h2M3 8.500h2M3 11.500h2" stroke="#2a5ad8" stroke-width="1.500"/><path d="M7 5.500h5M7 8.500h5M7 11.500h5" stroke="#777" stroke-width="1"/></svg><div class="t" style="/*ls*/letter-spacing:0.43px;left:729.5px;top:141px;z-index:4" id="tb5">En...</div><svg class="a" style="z-index:4;left:766px;top:142px" width="14" height="13" viewBox="0 0 13 12"><path d="M12.300 0.400C13 2.500 11 4.800 9 6.300C6 8.700 3 10.600 0.200 11.700C3 9 6 6 8 3.500C9.500 1.700 10.800 0.500 12.300 0.400Z" fill="#111"/><path d="M2.200 0.600C4.500 3.300 6.500 5.300 9 7.300C11.200 8.900 12.800 9.800 12.600 11.200C11 12.200 9 11.200 7.500 9.200C5.500 6.500 3.700 3.500 2.200 0.600Z" fill="#111"/></svg>
<div class="tab" style="left:798px;width:107px"></div><svg class="a" style="left:809px;top:140px;z-index:4" width="16" height="16" viewBox="0 0 16 16"><rect x="0.500" y="0.500" width="12" height="11" fill="#d8ecfc" stroke="#2a8ae8"/><rect x="1" y="1" width="11" height="2" fill="#2a9af8"/><rect x="6.500" y="4.500" width="9" height="11" fill="#fff" stroke="#1a52c8"/><path d="M8.500 7h5M8.500 9.500h5M8.500 12h5" stroke="#2a4ab8" stroke-width="1"/><path d="M1.500 6.500h3v-2l3 3-3 3v-2h-3z" fill="#20b030"/></svg><div class="t" style="/*ls*/letter-spacing:0.54px;left:830.0px;top:141px;z-index:4" id="tb6">Imp...</div><svg class="a" style="z-index:4;left:873px;top:142px" width="14" height="13" viewBox="0 0 13 12"><path d="M12.300 0.400C13 2.500 11 4.800 9 6.300C6 8.700 3 10.600 0.200 11.700C3 9 6 6 8 3.500C9.500 1.700 10.800 0.500 12.300 0.400Z" fill="#111"/><path d="M2.200 0.600C4.500 3.300 6.500 5.300 9 7.300C11.200 8.900 12.800 9.800 12.600 11.200C11 12.200 9 11.200 7.500 9.200C5.500 6.500 3.700 3.500 2.200 0.600Z" fill="#111"/></svg>
<div class="tab" style="left:905px;width:106px"></div><svg class="a" style="left:916px;top:140px;z-index:4" width="16" height="16" viewBox="0 0 16 16"><rect x="0.500" y="0.500" width="12" height="11" fill="#d8ecfc" stroke="#2a8ae8"/><rect x="1" y="1" width="11" height="2" fill="#2a9af8"/><rect x="2.500" y="4.500" width="9" height="11" fill="#fff" stroke="#1a52c8"/><path d="M4 7h4M4 9.500h4M4 12h4" stroke="#2a4ab8" stroke-width="1"/><path d="M7 8.500h3.500v-2l3.500 3-3.500 3v-2h-3.500z" fill="#223a9a"/></svg><div class="t" style="/*ls*/letter-spacing:0.26px;left:938.5px;top:141px;z-index:4" id="tb7">Exp...</div><svg class="a" style="z-index:4;left:980px;top:142px" width="14" height="13" viewBox="0 0 13 12"><path d="M12.300 0.400C13 2.500 11 4.800 9 6.300C6 8.700 3 10.600 0.200 11.700C3 9 6 6 8 3.500C9.500 1.700 10.800 0.500 12.300 0.400Z" fill="#111"/><path d="M2.200 0.600C4.500 3.300 6.500 5.300 9 7.300C11.200 8.900 12.800 9.800 12.600 11.200C11 12.200 9 11.200 7.500 9.200C5.500 6.500 3.700 3.500 2.200 0.600Z" fill="#111"/></svg>
<div class="a" style="left:500px;top:128px;width:1px;height:1px;background:#bfbbb4;box-shadow:3px 0px 0 #bfbbb4,6px 0px 0 #bfbbb4,9px 0px 0 #bfbbb4,12px 0px 0 #bfbbb4,15px 0px 0 #bfbbb4,1px 1px 0 #fbfaf8,4px 1px 0 #fbfaf8,7px 1px 0 #fbfaf8,10px 1px 0 #fbfaf8,13px 1px 0 #fbfaf8,16px 1px 0 #fbfaf8"></div><div class="a" style="left:500px;top:579px;width:1px;height:1px;background:#bfbbb4;box-shadow:3px 0px 0 #bfbbb4,6px 0px 0 #bfbbb4,9px 0px 0 #bfbbb4,12px 0px 0 #bfbbb4,15px 0px 0 #bfbbb4,1px 1px 0 #fbfaf8,4px 1px 0 #fbfaf8,7px 1px 0 #fbfaf8,10px 1px 0 #fbfaf8,13px 1px 0 #fbfaf8,16px 1px 0 #fbfaf8"></div>
<div class="a" style="left:216px;top:173px;width:196px;height:396px;border:1px solid #a39f98;background:#efebe7"></div>
<div class="a" style="left:217px;top:174px;width:181px;height:380px;overflow:hidden">
<div class="blk" style="left:1px;top:-11px;background:#d06430"></div>
<div class="blk" style="left:1px;top:19px;background:#dc7a30"></div>
<div class="blk" style="left:1px;top:49px;background:#e68a2c"></div>
<div class="blk" style="left:1px;top:79px;background:#ec962a"></div>
<div class="blk" style="left:1px;top:109px;background:#f2a428"></div>
<div class="blk" style="left:1px;top:139px;background:#f6ae26"></div>
<div class="blk" style="left:1px;top:169px;background:#fdb820"></div>
<div class="blk" style="left:1px;top:199px;background:#d4b438"></div>
<div class="blk" style="left:1px;top:229px;background:#a8ac50"></div>
<div class="blk" style="left:1px;top:259px;background:#80a866"></div>
<div class="blk" style="left:1px;top:289px;background:#58a078"></div>
<div class="blk" style="left:1px;top:319px;background:#529888"></div>
<div class="blk" style="left:1px;top:349px;background:#508e8e"></div>
<div class="a" style="left:0px;top:-11px;width:1px;height:391px;background:#fff"></div><div class="a" style="left:1px;top:-11px;width:2px;height:150px;background:rgba(255,255,255,.38)"></div>
<div class="a" style="left:2px;top:139px;width:123px;height:30px;background:#fad07e"></div>
<div class="a" style="left:126px;top:169px;width:2px;height:30px;background:#fdd678"></div>
<div class="a" style="left:126px;top:199px;width:24px;height:30px;background:#ead692"></div>
<div class="a" style="left:152px;top:229px;width:1px;height:60px;background:#c9d0a0"></div>
<div class="a" style="left:152px;top:289px;width:18px;height:30px;background:#a2c9b2"></div>
<div class="a" style="left:171px;top:319px;width:5px;height:61px;background:#9cc4c0"></div>
<div class="blk" style="left:1px;top:-11px" id="bk0">.bss</div>
<div class="blk" style="left:1px;top:19px" id="bk1">NT_HEADERS</div>
<div class="blk" style="left:1px;top:49px" id="bk2">FILE_HEADER</div>
<div class="blk" style="left:1px;top:79px" id="bk3">OPTIONAL_HEADER</div>
<div class="blk" style="left:1px;top:109px" id="bk4">IMAGE_SECTION_HEADER</div>
<div class="blk" style="left:1px;top:139px" id="bk5">.text</div>
<div class="blk" style="left:1px;top:169px" id="bk6">.data</div>
<div class="blk" style="left:1px;top:199px" id="bk7">.rdata</div>
<div class="blk" style="left:1px;top:229px" id="bk8">IMAGE_DIRECTORY_ENTRY_DEBUG</div>
<div class="blk" style="left:1px;top:259px" id="bk9">.buildid</div>
<div class="blk" style="left:1px;top:289px" id="bk10">/4</div>
<div class="blk" style="left:1px;top:319px" id="bk11">IMAGE_DIRECTORY_ENTRY_IMPORT</div>
<div class="blk" style="left:1px;top:349px" id="bk12">.idata</div>
</div>
<div class="sb" style="left:397px;top:174px;width:14px;height:380px"></div><div class="a" style="left:397px;top:174px;width:14px;height:14px;background:#f3f1ee;border-left:1px solid #b9b5ae;border-bottom:1px solid #c9c5bf"></div><svg class="a" style="left:400px;top:179px" width="8" height="5"><path d="M0 4H8L4 0Z" fill="#4a4a4a"/></svg><div class="a" style="left:397px;top:228px;width:14px;height:210px;background:linear-gradient(90deg,#fdfdfc,#f0eeeb);border:1px solid #b3afa8;border-right:none"></div><div class="a" style="left:397px;top:540px;width:14px;height:14px;background:#f3f1ee;border-left:1px solid #b9b5ae;border-top:1px solid #c9c5bf"></div><svg class="a" style="left:400px;top:545px" width="8" height="5"><path d="M0 0H8L4 4Z" fill="#4a4a4a"/></svg>
<div class="a" style="left:217px;top:554px;width:194px;height:14px;background:#e3e0dc;border-top:1px solid #b9b5ae"></div><div class="a" style="left:217px;top:555px;width:14px;height:13px;background:#f3f1ee;border-right:1px solid #c9c5bf"></div><svg class="a" style="left:221px;top:557px" width="5" height="9"><path d="M4.500 0V8L0.500 4Z" fill="#4a4a4a"/></svg><div class="a" style="left:230px;top:554px;width:138px;height:14px;background:linear-gradient(#fdfdfc,#f0eeeb);border:1px solid #b3afa8;border-bottom:none"></div><div class="a" style="left:383px;top:555px;width:15px;height:13px;background:#f3f1ee;border-left:1px solid #c9c5bf;border-right:1px solid #b9b5ae"></div><svg class="a" style="left:388px;top:557px" width="5" height="9"><path d="M0 0V8L4 4Z" fill="#4a4a4a"/></svg><div class="a" style="left:398px;top:555px;width:13px;height:13px;background:#efebe7"></div>
<div class="a" style="left:414px;top:362px;width:1px;height:1px;background:#bfbbb4;box-shadow:0px 3px 0 #bfbbb4,0px 6px 0 #bfbbb4,0px 9px 0 #bfbbb4,0px 12px 0 #bfbbb4,0px 15px 0 #bfbbb4,1px 1px 0 #fbfaf8,1px 4px 0 #fbfaf8,1px 7px 0 #fbfaf8,1px 10px 0 #fbfaf8,1px 13px 0 #fbfaf8,1px 16px 0 #fbfaf8"></div>
<div class="a" style="left:416px;top:173px;width:586px;height:396px;border:1px solid #a39f98;background:#fff"></div>
<div class="a" style="left:417px;top:174px;width:570px;height:19px;background:linear-gradient(#fbfaf9,#ece9e5);border-bottom:1px solid #b9b5ae"></div>
<div class="a" style="left:677px;top:174px;width:1px;height:18px;background:#b9b5ae"></div><div class="a" style="left:678px;top:174px;width:1px;height:18px;background:#fdfdfc"></div>

<div class="t" style="/*ls*/letter-spacing:1.00px;left:418.0px;top:175px" id="hi">Item</div><div class="t" style="/*ls*/letter-spacing:0.39px;left:680.5px;top:175px" id="hv">Value</div>
<div class="sb" style="left:987px;top:174px;width:14px;height:380px"></div><div class="a" style="left:987px;top:174px;width:14px;height:14px;background:#f3f1ee;border-left:1px solid #b9b5ae;border-bottom:1px solid #c9c5bf"></div><svg class="a" style="left:990px;top:179px" width="8" height="5"><path d="M0 4H8L4 0Z" fill="#4a4a4a"/></svg><div class="a" style="left:987px;top:247px;width:14px;height:173px;background:linear-gradient(90deg,#fdfdfc,#f0eeeb);border:1px solid #b3afa8;border-right:none"></div><div class="a" style="left:987px;top:540px;width:14px;height:14px;background:#f3f1ee;border-left:1px solid #b9b5ae;border-top:1px solid #c9c5bf"></div><svg class="a" style="left:990px;top:545px" width="8" height="5"><path d="M0 0H8L4 4Z" fill="#4a4a4a"/></svg>
<div class="a" style="left:417px;top:554px;width:584px;height:14px;background:#e3e0dc;border-top:1px solid #b9b5ae"></div><div class="a" style="left:417px;top:555px;width:14px;height:13px;background:#f3f1ee;border-right:1px solid #c9c5bf"></div><svg class="a" style="left:421px;top:557px" width="5" height="9"><path d="M4.500 0V8L0.500 4Z" fill="#4a4a4a"/></svg><div class="a" style="left:431px;top:554px;width:156px;height:14px;background:linear-gradient(#fdfdfc,#f0eeeb);border:1px solid #b3afa8;border-bottom:none"></div><div class="a" style="left:973px;top:555px;width:15px;height:13px;background:#f3f1ee;border-left:1px solid #c9c5bf;border-right:1px solid #b9b5ae"></div><svg class="a" style="left:978px;top:557px" width="5" height="9"><path d="M0 0V8L4 4Z" fill="#4a4a4a"/></svg><div class="a" style="left:988px;top:555px;width:13px;height:13px;background:#efebe7"></div>
<div class="a" style="left:417px;top:193px;width:570px;height:361px;overflow:hidden">
<div class="row " style="left:43px;top:0px;height:15px;line-height:15px;width:auto" id="r193">SHA1 (no overlay)</div><div class="row lnk" style="left:264px;top:0px;height:15px;line-height:15px;width:auto" id="v193">77d643da6497bf706952a5a65e8a49353a8d3dac</div>
<div class="row " style="left:43px;top:15px;height:15px;line-height:15px;width:auto" id="r208">SHA256 (no overlay)</div><div class="row lnk" style="left:264px;top:15px;height:15px;line-height:15px;width:auto" id="v208">97bf89b7b2dafc55f3ee1dd83b476e37b7545e07e1e2c1</div>
<div class="row " style="left:43px;top:30px;height:15px;line-height:15px;width:auto" id="r223">Entropy (no overlay)</div><div class="row ent" style="left:264px;top:30px;height:15px;line-height:15px;width:auto" id="v223">3.948859</div>
<div class="row " style="left:43px;top:45px;height:15px;line-height:15px;width:auto" id="r238">Compiled</div><div class="row lnk" style="left:264px;top:45px;height:15px;line-height:15px;width:auto" id="v238">1970-01-01T00:00:07</div>
<div class="row " style="left:43px;top:60px;height:15px;line-height:15px;width:auto" id="r253">PdbFilePath</div>
<svg class="a" style="left:27px;top:77px" width="6" height="10"><path d="M0 1V9.500L5 5.250Z" fill="#333"/></svg><div class="row g" style="left:43px;top:75px;height:15px;line-height:15px;width:auto" id="r268">IMAGE_DOS_HEADER</div>
<svg class="a" style="left:27px;top:93px" width="6" height="10"><path d="M0 1V9.500L5 5.250Z" fill="#333"/></svg><svg class="a" style="left:44px;top:90px" width="14" height="15" viewBox="0 0 14 14" preserveAspectRatio="none"><path d="M0.500 0.500h13v13h-11.500l-1.500-1.500z" fill="#4a68a8" stroke="#34508c"/><rect x="2.500" y="1" width="9" height="6.500" fill="#fafafa"/><rect x="3.500" y="9.500" width="7" height="4" fill="#9aa4b8"/><rect x="4.500" y="10.500" width="2" height="3" fill="#222"/></svg><div class="row g" style="left:65px;top:90px;height:16px;line-height:16px;width:auto" id="r283">DOS_STUB</div>
<svg class="a" style="left:25px;top:110px" width="10" height="6"><path d="M0 0.500H9L4.500 5.500Z" fill="#333"/></svg><div class="row g" style="left:43px;top:106px;height:15px;line-height:15px;width:auto" id="r299">IMAGE_NT_HEADERS</div>
<svg class="a" style="left:47px;top:123px" width="6" height="10"><path d="M0 1V9.500L5 5.250Z" fill="#333"/></svg><div class="row g" style="left:63px;top:121px;height:15px;line-height:15px;width:auto" id="r314">NT_HEADERS</div>
<svg class="a" style="left:45px;top:140px" width="10" height="6"><path d="M0 0.500H9L4.500 5.500Z" fill="#333"/></svg><div class="row g" style="left:63px;top:136px;height:15px;line-height:15px;width:auto" id="r329">IMAGE_SECTION_HEADER</div>
<svg class="a" style="left:67px;top:154px" width="6" height="10"><path d="M0 1V9.500L5 5.250Z" fill="#333"/></svg><svg class="a" style="left:84px;top:151px" width="14" height="15" viewBox="0 0 14 14" preserveAspectRatio="none"><path d="M0.500 0.500h13v13h-11.500l-1.500-1.500z" fill="#4a68a8" stroke="#34508c"/><rect x="2.500" y="1" width="9" height="6.500" fill="#fafafa"/><rect x="3.500" y="9.500" width="7" height="4" fill="#9aa4b8"/><rect x="4.500" y="10.500" width="2" height="3" fill="#222"/></svg><div class="row g gi" style="left:105px;top:151px;height:16px;line-height:16px;width:auto" id="r344">.text</div>
<svg class="a" style="left:67px;top:170px" width="6" height="10"><path d="M0 1V9.500L5 5.250Z" fill="#333"/></svg><svg class="a" style="left:84px;top:167px" width="14" height="15" viewBox="0 0 14 14" preserveAspectRatio="none"><path d="M0.500 0.500h13v13h-11.500l-1.500-1.500z" fill="#4a68a8" stroke="#34508c"/><rect x="2.500" y="1" width="9" height="6.500" fill="#fafafa"/><rect x="3.500" y="9.500" width="7" height="4" fill="#9aa4b8"/><rect x="4.500" y="10.500" width="2" height="3" fill="#222"/></svg><div class="row g gi" style="left:105px;top:167px;height:16px;line-height:16px;width:auto" id="r360">.data</div>
<svg class="a" style="left:67px;top:186px" width="6" height="10"><path d="M0 1V9.500L5 5.250Z" fill="#333"/></svg><svg class="a" style="left:84px;top:183px" width="14" height="15" viewBox="0 0 14 14" preserveAspectRatio="none"><path d="M0.500 0.500h13v13h-11.500l-1.500-1.500z" fill="#4a68a8" stroke="#34508c"/><rect x="2.500" y="1" width="9" height="6.500" fill="#fafafa"/><rect x="3.500" y="9.500" width="7" height="4" fill="#9aa4b8"/><rect x="4.500" y="10.500" width="2" height="3" fill="#222"/></svg><div class="row g gi" style="left:105px;top:183px;height:16px;line-height:16px;width:auto" id="r376">.rdata</div>
<svg class="a" style="left:67px;top:202px" width="6" height="10"><path d="M0 1V9.500L5 5.250Z" fill="#333"/></svg><svg class="a" style="left:84px;top:199px" width="14" height="15" viewBox="0 0 14 14" preserveAspectRatio="none"><path d="M0.500 0.500h13v13h-11.500l-1.500-1.500z" fill="#4a68a8" stroke="#34508c"/><rect x="2.500" y="1" width="9" height="6.500" fill="#fafafa"/><rect x="3.500" y="9.500" width="7" height="4" fill="#9aa4b8"/><rect x="4.500" y="10.500" width="2" height="3" fill="#222"/></svg><div class="row g gi" style="left:105px;top:199px;height:16px;line-height:16px;width:auto" id="r392">.buildid</div>
<svg class="a" style="left:67px;top:218px" width="6" height="10"><path d="M0 1V9.500L5 5.250Z" fill="#333"/></svg><svg class="a" style="left:84px;top:215px" width="14" height="15" viewBox="0 0 14 14" preserveAspectRatio="none"><path d="M0.500 0.500h13v13h-11.500l-1.500-1.500z" fill="#4a68a8" stroke="#34508c"/><rect x="2.500" y="1" width="9" height="6.500" fill="#fafafa"/><rect x="3.500" y="9.500" width="7" height="4" fill="#9aa4b8"/><rect x="4.500" y="10.500" width="2" height="3" fill="#222"/></svg><div class="row g gi" style="left:105px;top:215px;height:16px;line-height:16px;width:auto" id="r408">/4</div>
<div class="a" style="left:0;top:231px;width:571px;height:16px;background:#308cc6"></div><svg class="a" style="left:65px;top:236px" width="10" height="6"><path d="M0 0.500H9L4.500 5.500Z" fill="#333"/></svg><svg class="a" style="left:84px;top:231px" width="14" height="15" viewBox="0 0 14 14" preserveAspectRatio="none"><path d="M0.500 0.500h13v13h-11.500l-1.500-1.500z" fill="#4a68a8" stroke="#34508c"/><rect x="2.500" y="1" width="9" height="6.500" fill="#cfe6f6"/><rect x="3.500" y="9.500" width="7" height="4" fill="#9aa4b8"/><rect x="4.500" y="10.500" width="2" height="3" fill="#222"/></svg><div class="row g gi selw" style="left:105px;top:231px;height:16px;line-height:16px;width:auto" id="r424">.bss</div>
<div class="row " style="left:103px;top:247px;height:15px;line-height:15px;width:auto" id="r440">Name</div><div class="row " style="left:264px;top:247px;height:15px;line-height:15px;width:auto" id="v440">.bss</div>
<div class="row " style="left:103px;top:262px;height:15px;line-height:15px;width:auto" id="r455">Misc</div><div class="row " style="left:264px;top:262px;height:15px;line-height:15px;width:auto" id="v455">0x00000b74</div>
<div class="row " style="left:103px;top:277px;height:15px;line-height:15px;width:auto" id="r470">Misc_PhysicalAddress</div><div class="row " style="left:264px;top:277px;height:15px;line-height:15px;width:auto" id="v470">0x00000b74</div>
<div class="row " style="left:103px;top:292px;height:15px;line-height:15px;width:auto" id="r485">Misc_VirtualSize</div><div class="row " style="left:264px;top:292px;height:15px;line-height:15px;width:auto" id="v485">0x00000b74 2.9 KB (2932 bytes)</div>
<div class="row bd" style="left:103px;top:307px;height:15px;line-height:15px;width:auto" id="r500">VirtualAddress</div><div class="row bd" style="left:264px;top:307px;height:15px;line-height:15px;width:auto" id="v500">0x00022000 -&gt; .bss+0x00000000</div>
<div class="row " style="left:103px;top:322px;height:15px;line-height:15px;width:auto" id="r515">SizeOfRawData</div><div class="row " style="left:264px;top:322px;height:15px;line-height:15px;width:auto" id="v515">0x00000000 0 bytes</div>
<div class="row " style="left:103px;top:337px;height:15px;line-height:15px;width:auto" id="r530">PointerToRawData</div><div class="row " style="left:264px;top:337px;height:15px;line-height:15px;width:auto" id="v530">0x00000000</div>
<div class="row " style="left:103px;top:352px;height:15px;line-height:15px;width:auto" id="r545">PointerToRelocations</div><div class="row " style="left:264px;top:352px;height:15px;line-height:15px;width:auto" id="v545">0x00000000</div>
</div>
<div class="dock" style="left:2px;top:582px;width:1009px;height:26px"></div>
<svg class="a" style="left:6px;top:587px" width="15" height="16" viewBox="0 0 15 16"><rect x="0.500" y="0.500" width="13" height="15" fill="#f6f9ff" stroke="#6a7684"/><rect x="0" y="0" width="14" height="3" fill="#1a38b8"/><rect x="1" y="1" width="11" height="1" fill="#38c8e8"/><path d="M3 6.500h8M3 8.500h8M3 10.500h8M3 12.500h8" stroke="#5a6270" stroke-width="1"/></svg>
<div class="t" style="/*ls*/letter-spacing:0.40px;left:26.5px;top:587px" id="dt3">Output window</div>
<div class="a" style="left:941px;top:592px;width:10px;height:9px;border:1px solid #111;border-top-width:2px;background:#fff"></div>
<svg class="a" style="left:966px;top:591px" width="12" height="12" viewBox="0 0 12 12"><rect x="0.500" y="0.500" width="10" height="10" rx="2.500" fill="#f4f2ef" stroke="#8a8782"/><rect x="4.500" y="2.500" width="4" height="4" fill="none" stroke="#77746f" rx="1"/><rect x="2.500" y="4.500" width="4" height="4" fill="#f4f2ef" stroke="#77746f" rx="1"/></svg>
<svg class="a" style="left:992px;top:591px" width="12" height="12" viewBox="0 0 12 12"><rect x="0.500" y="0.500" width="10" height="10" rx="2.500" fill="#f4f2ef" stroke="#6a6864"/><path d="M3 3l5 5M8 3l-5 5" stroke="#55534f" stroke-width="1.800"/></svg>
<div class="a" style="left:2px;top:610px;width:1009px;height:55px;border:1px solid #a39f98;background:#fff"></div>
<div class="t m" style="left:9px;top:609px;font-size:12px;letter-spacing:0.6px;font-weight:bold;line-height:14px;height:14px;color:#000" id="o0">Propagating type information...</div>
<div class="t m" style="left:9px;top:623px;font-size:12px;letter-spacing:0.6px;font-weight:bold;line-height:14px;height:14px;color:#000" id="o1">408340: propagate_stkargs: function is already typed</div>
<div class="t m" style="left:9px;top:637px;font-size:12px;letter-spacing:0.6px;font-weight:bold;line-height:14px;height:14px;color:#000" id="o2">Function argument information has been propagated</div>
<div class="t m" style="left:9px;top:651px;font-size:12px;letter-spacing:0.6px;font-weight:bold;line-height:14px;height:14px;color:#000" id="o3">The initial autoanalysis has been finished.</div>
<div class="a" style="left:996px;top:611px;width:14px;height:53px;background:linear-gradient(90deg,#fdfdfc,#eceae6);border-left:1px solid #b9b5ae"></div>
<div class="a" style="left:997px;top:624px;width:13px;height:1px;background:#c9c5bf"></div><div class="a" style="left:997px;top:650px;width:13px;height:1px;background:#c9c5bf"></div>
<svg class="a" style="left:999px;top:616px" width="8" height="5"><path d="M0 4H8L4 0Z" fill="#4a4a4a"/></svg>
<svg class="a" style="left:999px;top:655px" width="8" height="5"><path d="M0 0H8L4 4Z" fill="#4a4a4a"/></svg>
<div class="btn" style="left:3px;top:666px;width:66px;height:26px;border-radius:3px"></div>
<div class="t" style="/*ls*/letter-spacing:0.49px;left:14.5px;top:671px" id="py">Python</div>
<div class="a" style="left:72px;top:666px;width:938px;height:26px;border:1px solid #a8a49d;border-radius:3px;background:#fff"></div>
<div class="t m" style="left:4px;top:696px;font-size:10.5px;letter-spacing:0.9px;color:#6e6e6c;white-space:pre" id="st1">AU:  idle   Down</div>
<div class="t m" style="left:167px;top:696px;font-size:10.5px;letter-spacing:0.9px;color:#6e6e6c;white-space:pre" id="st2">Disk: 169GB</div>
<div class="a" style="left:1008px;top:703px;width:1px;height:1px;background:#a3a09b;box-shadow:1px 1px 0 #fbfaf9"></div>
<div class="a" style="left:1005px;top:706px;width:1px;height:1px;background:#a3a09b;box-shadow:1px 1px 0 #fbfaf9"></div>
<div class="a" style="left:1008px;top:706px;width:1px;height:1px;background:#a3a09b;box-shadow:1px 1px 0 #fbfaf9"></div>
<div class="a" style="left:1002px;top:709px;width:1px;height:1px;background:#a3a09b;box-shadow:1px 1px 0 #fbfaf9"></div>
<div class="a" style="left:1005px;top:709px;width:1px;height:1px;background:#a3a09b;box-shadow:1px 1px 0 #fbfaf9"></div>
<div class="a" style="left:1008px;top:709px;width:1px;height:1px;background:#a3a09b;box-shadow:1px 1px 0 #fbfaf9"></div>
<div class="a" style="left:1002px;top:712px;width:1px;height:1px;background:#a3a09b;box-shadow:1px 1px 0 #fbfaf9"></div>
<div class="a" style="left:1005px;top:712px;width:1px;height:1px;background:#a3a09b;box-shadow:1px 1px 0 #fbfaf9"></div>
<div class="a" style="left:1008px;top:712px;width:1px;height:1px;background:#a3a09b;box-shadow:1px 1px 0 #fbfaf9"></div>
<div class="a" id="frame2"></div><div class="a" style="left:1px;top:25px;width:1px;height:690px;background:#dddbc9;z-index:49"></div><div class="a" id="frame3"></div><div class="a" id="frame"></div>
</div></body></html>
